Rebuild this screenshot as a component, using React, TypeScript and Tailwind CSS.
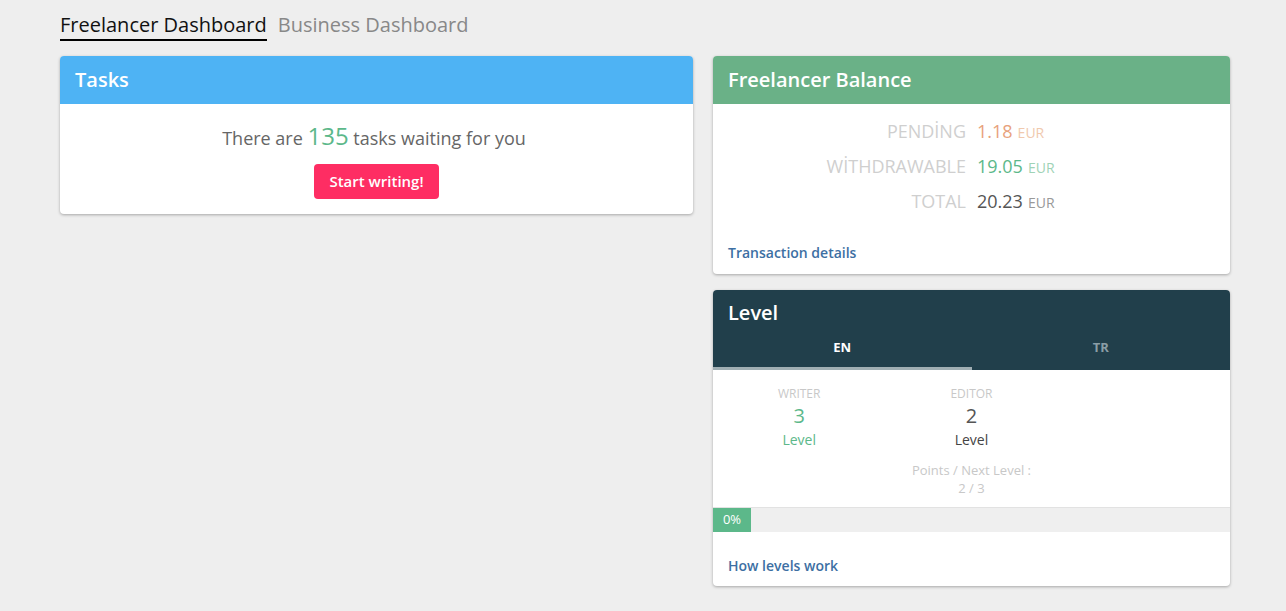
import React from 'react';

const Card: React.FC<{ title: string; color: string; children: React.ReactNode; className?: string }> = ({
  title,
  color,
  children,
  className = '',
}) => (
  <div className={`bg-white rounded-[4px] shadow-[0_1px_3px_rgba(0,0,0,0.3)] overflow-hidden ${className}`}>
    <div className={`h-12 flex items-center px-[15px] ${color}`}>
      <h2 className="text-white text-[20px] font-semibold">{title}</h2>
    </div>
    {children}
  </div>
);

const BalanceRow: React.FC<{ label: string; value: string; valueColor: string; curColor: string }> = ({
  label,
  value,
  valueColor,
  curColor,
}) => (
  <div className="flex items-baseline h-[35px]">
    <div className="w-[253px] text-right text-[18px] text-[#cfcfcf] uppercase">{label}</div>
    <div className="pl-[11px] flex items-baseline gap-[5px]">
      <span className={`text-[18px] ${valueColor}`}>{value}</span>
      <span className={`text-[14px] ${curColor}`}>EUR</span>
    </div>
  </div>
);

export default function App() {
  return (
    <div
      className="min-h-screen w-full bg-[#eeeeee] text-[#555]"
      style={{ fontFamily: '"Open Sans", "Noto Sans", Arial, sans-serif' }}
    >
      <div className="w-[1170px] ml-[60px] pt-[10px]">
        {/* Dashboard tabs */}
        <div className="flex gap-[11px] h-[31px] items-start">
          <div className="text-[20px] text-[#111] border-b-2 border-black leading-[29px]">Freelancer Dashboard</div>
          <div className="text-[20px] text-[#888] leading-[29px]">Business Dashboard</div>
        </div>

        <div className="flex gap-5 mt-[15px] items-start">
          {/* Tasks */}
          <Card title="Tasks" color="bg-[#4eb3f4]" className="w-[633px]">
            <div className="flex flex-col items-center pt-[18px] pb-[15px]">
              <p className="text-[18px] text-[#666] leading-[28px] pr-[5px]">
                There are <span className="text-[24px] text-[#5cb88a]">135</span> tasks waiting for you
              </p>
              <button className="mt-[12px] h-[35px] px-[15px] rounded-[4px] bg-[#fe2d63] text-white text-[15px] font-semibold">
                Start writing!
              </button>
            </div>
          </Card>

          <div className="w-[517px] flex flex-col gap-4">
            {/* Balance */}
            <Card title="Freelancer Balance" color="bg-[#6ab187]">
              <div className="pt-[14px]">
                <BalanceRow label="Pendİng" value="1.18" valueColor="text-[#e8a27c]" curColor="text-[#f0c9ae]" />
                <BalanceRow label="Wİthdrawable" value="19.05" valueColor="text-[#5cb88a]" curColor="text-[#9fd3b6]" />
                <BalanceRow label="Total" value="20.23" valueColor="text-[#555]" curColor="text-[#999]" />
              </div>
              <div className="px-[15px] pt-[17px] pb-[10px]">
                <a className="text-[14px] font-semibold text-[#3d6fa3]">Transaction details</a>
              </div>
            </Card>

            {/* Level */}
            <div className="bg-white rounded-[4px] shadow-[0_1px_3px_rgba(0,0,0,0.3)] overflow-hidden">
              <div className="bg-[#213f4b]">
                <div className="h-[46px] flex items-center px-[15px]">
                  <h2 className="text-white text-[20px] font-semibold">Level</h2>
                </div>
                <div className="flex h-[34px]">
                  <div className="flex-1 flex items-center justify-center pb-[8px] text-[13px] font-bold text-white border-b-[3px] border-[#a0aeb3]">
                    EN
                  </div>
                  <div className="flex-1 flex items-center justify-center pb-[8px] text-[13px] font-bold text-[#8a9ea6] border-b-[3px] border-transparent">
                    TR
                  </div>
                </div>
              </div>
              <div className="grid grid-cols-3 pt-[16px]">
                <div className="flex flex-col items-center">
                  <span className="text-[12px] text-[#c8c8c8] leading-[16px]">WRITER</span>
                  <span className="text-[20px] text-[#5cb88a] leading-[28px]">3</span>
                  <span className="text-[14px] text-[#5cb88a] leading-[20px]">Level</span>
                </div>
                <div className="flex flex-col items-center">
                  <span className="text-[12px] text-[#c8c8c8] leading-[16px]">EDITOR</span>
                  <span className="text-[20px] text-[#555] leading-[28px]">2</span>
                  <span className="text-[14px] text-[#444] leading-[20px]">Level</span>
                </div>
                <div />
              </div>
              <div className="flex flex-col items-center pt-[11px] text-[13px] text-[#c8c8c8] leading-[18px]">
                <span>Points / Next Level :</span>
                <span>2 / 3</span>
              </div>
              <div className="mt-[10px] h-[25px] bg-[#efefef] border-t border-[#e2e2e2] flex">
                <div className="w-[38px] bg-[#5cb88a] text-white text-[13px] flex items-center justify-center">0%</div>
              </div>
              <div className="px-[15px] pt-[21px] pb-[9px]">
                <a className="text-[14px] font-semibold text-[#3d6fa3]">How levels work</a>
              </div>
            </div>
          </div>
        </div>
      </div>
    </div>
  );
}
